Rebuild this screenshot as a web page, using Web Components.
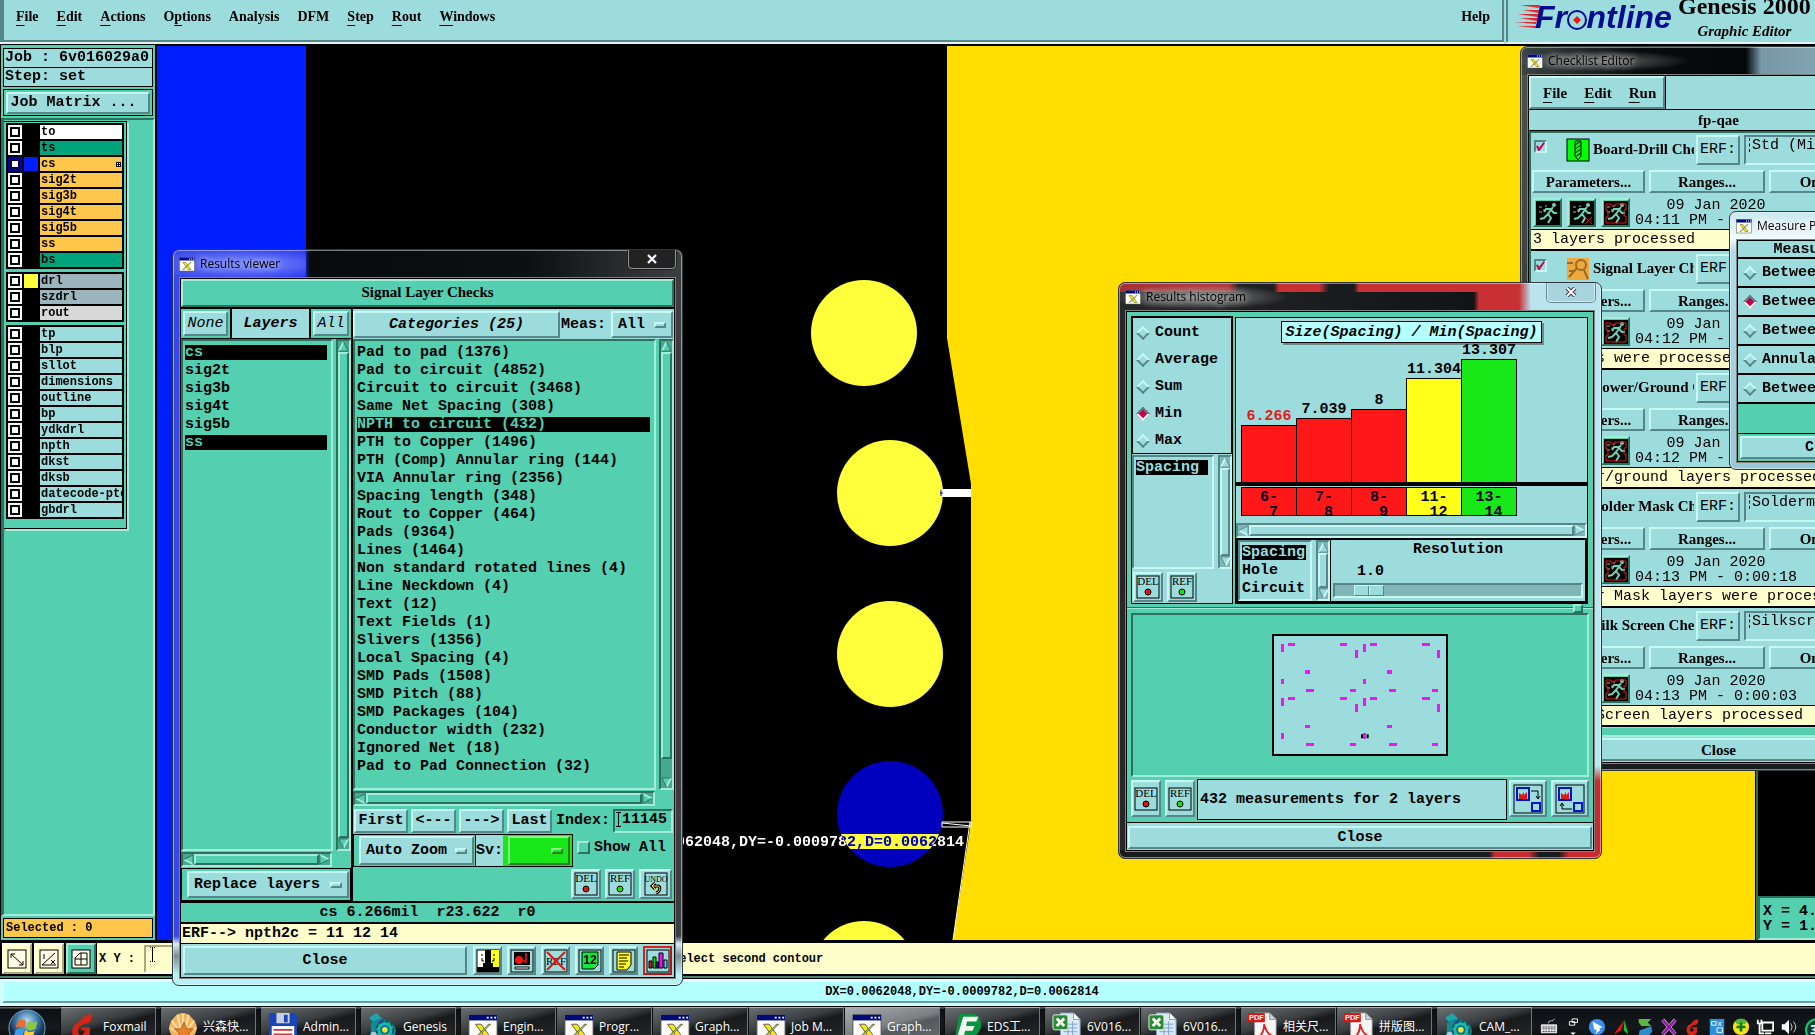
<!DOCTYPE html>
<html lang="en">
<head>
<meta charset="utf-8">
<title>Genesis 2000 - Graphic Editor</title>
<style>
  body {
    margin: 0;
    background: #000;
    overflow: hidden;
    font: bold 15px/18px "Liberation Mono", "Courier New", monospace;
    color: #000;
  }
</style>
</head>
<body>
<gx-desktop></gx-desktop>

<script>
// palettes, handed down to every widget as custom properties
const TEAL = "--face:#54cfb0; --hi:#a2edd9; --lo:#2c705e; --trough:#46a890;";
const AQUA = "--face:#9cdcdc; --hi:#c8f8f4; --lo:#56868a; --trough:#80b6b8;";
const CREAM = "--face:#ffffcc; --hi:#ffffe8; --lo:#a8a884; --trough:#d8d8a8;";
const SERIF = '"Liberation Serif", "Times New Roman", serif';
const UI = '"Open Sans", "Noto Sans CJK SC", sans-serif';

const base = /*css*/ `
  * { box-sizing: border-box; }
  :host([hidden]) { display: none; }
  button, input, select { font: inherit; color: inherit; margin: 0; border-radius: 0; outline: none; }
  button { padding: 0; background: none; border: 0; text-align: center; }
  .teal { ${TEAL} background: var(--face); }
  .aqua { ${AQUA} background: var(--face); }
  .cream { ${CREAM} background: var(--face); }
  .up { border: 2px solid; border-color: var(--hi) var(--lo) var(--lo) var(--hi); }
  .down { border: 2px solid; border-color: var(--lo) var(--hi) var(--hi) var(--lo); }
`;

class Widget extends HTMLElement {
  constructor() {
    super();
    this.attachShadow({ mode: "open" });
  }
  connectedCallback() {
    const t = document.createElement("template");
    t.innerHTML = `<style>${base}${this.css()}</style>${this.html()}`;
    this.shadowRoot.replaceChildren(t.content.cloneNode(true));
  }
  attr(name, fallback = "") {
    return this.getAttribute(name) ?? fallback;
  }
  css() { return ""; }
  html() { return "<slot></slot>"; }
}

/* ---------- icons ---------- */

const runner = (extra) => `
  <rect width="24" height="24" fill="#000"/>
  <g stroke="#6fd0b4" stroke-width="2" fill="none">
    <path d="M17 6L12 13L15 17L12 22M12 13L8 17L4 18M15 8L10 8L8 11M15 9L18 12L21 12"/>
    <path d="M3 6h3M7 9h2M9 5h2M3 11h3" stroke-width="1"/>
  </g><circle cx="18" cy="4" r="2" fill="#6fd0b4"/>${extra}`;
const tag = (word, size, color) => `
  <rect x="1" y="1" width="22" height="22" fill="none" stroke="#000"/>
  <text x="12" y="10" font-family="Liberation Serif, serif" font-weight="normal" font-size="${size}" text-anchor="middle">${word}</text>
  ${color ? `<circle cx="12" cy="17" r="3" fill="${color}" stroke="#000"/>` : ""}`;
const xwin = `
  <rect x="1" y="3" width="30" height="27" fill="#fff" stroke="#555"/>
  <rect x="1" y="3" width="30" height="6" fill="#000a78"/>
  <path d="M20 5h2v2h-2zM24 5h2v2h-2zM28 5h2v2h-2z" fill="#fff"/>
  <path d="M8 13h6l10 14h-6z" fill="#f4ec00" stroke="#554" stroke-width="1"/>
  <path d="M22 13h2L10 27H8z" fill="#f4ec00" stroke="#554" stroke-width="1"/>`;
const foxmail = `<path d="M25 2C14 4 16 9 9 12C2 17 3 30 13 31C24 31 24 24 23 16L13 17L16 20L18 20C17 25 12 26 11 22C10 17 14 13 20 12C26 11 25 6 25 2Z" fill="#d62518"/>`;
const gears = `
  <path d="M1 6L9 1L15 7L5 10Z" fill="#19a7ae"/>
  <path d="M3 12C10 5 26 8 29 17C32 25 24 31 15 31C6 31 0 25 3 21Z" fill="#118a94"/>
  <circle cx="18" cy="19" r="9" fill="#1cb9a8" stroke="#0c5860" stroke-width="2" stroke-dasharray="4 2"/>
  <circle cx="18" cy="19" r="5" fill="#0f6e88"/><circle cx="18" cy="19" r="3" fill="#e6e640"/>
  <circle cx="6" cy="24" r="3" fill="#b8c8d8"/><path d="M11 12l6-3" stroke="#274a8c" stroke-width="3"/>`;
const excel = `
  <path d="M9 1h14l7 7v24H9z" fill="#dceaf8" stroke="#7f9cc0"/>
  <path d="M23 1v7h7" fill="#fff" stroke="#7f9cc0"/>
  <path d="M12 13h15M12 17h15M12 21h15M12 25h15M17 10v20M22 10v20" stroke="#7c9fcc"/>
  <rect x="1" y="3" width="16" height="16" rx="2" fill="#2d8a34" stroke="#e8f4e8"/>
  <path d="M5 7l8 8M13 7l-8 8" stroke="#fff" stroke-width="3"/>`;
const pdf = `
  <path d="M7 1h16l7 7v24H7z" fill="#f6f6f6" stroke="#999"/>
  <path d="M23 1v7h7" fill="#ccc" stroke="#999"/>
  <path d="M10 30C15 24 18 18 17 13C20 22 23 26 29 26C22 24 16 26 10 30" fill="none" stroke="#e02020" stroke-width="2"/>
  <rect x="0" y="1" width="18" height="10" rx="1" fill="#d81818"/>
  <text x="9" y="9" font-family="Liberation Sans, sans-serif" font-weight="bold" font-size="8" fill="#fff" text-anchor="middle">PDF</text>`;

const ICONS = {
  del: [24, tag("DEL", 11, "#e01414")],
  ref: [24, tag("REF", 11, "#14e014")],
  undo: [24, tag("UNDO", 8) + `<path d="M9 14h5c3 1 2 6-2 7M11 11l-3 3l3 3" fill="none" stroke="#000" stroke-width="3"/><path d="M9 14h5c3 1 2 6-2 7M11 11l-3 3l3 3" fill="none" stroke="#ffe83c" stroke-width="1"/>`],
  faces: [24, `<rect x="1" y="1" width="22" height="22" fill="#fff" stroke="#000"/><path d="M12 1h11v22H12z" fill="#ffff1c"/><path d="M9 1h6v13h2v4h6v5H1v-5h6v-4h2z"/><path d="M5 6h2M17 6h2M6 9v3M6 12h2M18 9v3M16 12h2" stroke="#000"/>`],
  record: [24, `<rect x="1" y="1" width="22" height="22" fill="#9cdcdc" stroke="#000"/><path d="M4 3h16v13H4z"/><circle cx="9" cy="11" r="4" fill="#f01414"/><path d="M16 4v10M12 12h4" stroke="#c01414" stroke-width="2"/><path d="M5 18h14v2H5z" fill="#fff" stroke="#000"/>`],
  noref: [24, tag("REF", 11).replace('y="10"', 'y="16"') + `<path d="M3 3l18 18M21 3L3 21" stroke="#e01414" stroke-width="2"/>`],
  pages: [24, `<rect x="1" y="1" width="22" height="22" fill="#9cdcdc" stroke="#000"/><path d="M4 3h16v13l-4 4H4z" fill="#14e83c" stroke="#000"/><text x="12" y="15" font-family="Liberation Sans, sans-serif" font-weight="bold" font-size="12" text-anchor="middle">12</text>`],
  note: [24, `<rect x="1" y="1" width="22" height="22" fill="#9cdcdc" stroke="#000"/><path d="M5 3h14v13l-4 5H5z" fill="#ffff28" stroke="#000"/><path d="M7 6h10M7 9h8M7 12h9M7 15h7M7 18h5" stroke="#000"/>`],
  chart: [24, `<rect x="1" y="1" width="22" height="22" fill="#9cdcdc" stroke="#000"/><path d="M3 12h3v7H3z" fill="#d01c1c" stroke="#000"/><path d="M7 8h3v11H7z" fill="#14d014" stroke="#000"/><path d="M10 13h3v6h-3z" fill="#1414b4" stroke="#000"/><path d="M13 4h4v15h-4z" fill="#e814e8" stroke="#000"/><path d="M18 11h3v8h-3z" fill="#3ce0f0" stroke="#000"/>`],
  run: [24, runner("")],
  runsel: [24, runner(`<path d="M15 16l7 7M22 16l-7 7" stroke="#c01414"/>`)],
  runall: [24, runner(`<path d="M2 3h5v2h4v-2h11v6h-2v6h2v7H2v-6h2v-6H2z" fill="none" stroke="#e01c1c"/>`)],
  drill: [24, `<rect x="1" y="1" width="22" height="22" fill="#00ff00" stroke="#000"/><path d="M9 3h6v15l-3 4l-3-4z" fill="none" stroke="#000"/><path d="M9 7l6-4M9 11l6-4M9 15l6-4M9 19l6-4" stroke="#000"/>`],
  signal: [24, `<rect x="1" y="1" width="22" height="22" fill="#f0a83c"/><circle cx="15" cy="8" r="5" fill="none" stroke="#9a6a28" stroke-width="2"/><path d="M11 11L3 20M1 6h6M18 13l4 9M3 14h5" stroke="#9a6a28" stroke-width="2"/>`],
  copyout: [30, `<rect x="1" y="1" width="28" height="28" fill="none" stroke="#000"/><rect x="4" y="4" width="12" height="12" fill="#9cdcdc" stroke="#0014d0" stroke-width="2"/><path d="M6 15V9l3 2l2-3v3l3-3v7z" fill="#e81414"/><path d="M18 7h7v8M23 12l2 3l2-3" fill="none" stroke="#000"/><rect x="19" y="19" width="8" height="8" fill="none" stroke="#0014d0" stroke-width="2"/>`],
  copyin: [30, `<rect x="1" y="1" width="28" height="28" fill="none" stroke="#000"/><rect x="4" y="4" width="12" height="12" fill="#9cdcdc" stroke="#0014d0" stroke-width="2"/><path d="M6 15V9l3 2l2-3v3l3-3v7z" fill="#e81414"/><path d="M17 25H7v-6M5 22l2-3l2 3" fill="none" stroke="#000"/><rect x="19" y="19" width="8" height="8" fill="none" stroke="#0014d0" stroke-width="2"/>`],
  snapline: [20, `<rect x="1" y="1" width="18" height="18" fill="#ffffe8" stroke="#000"/><path d="M4 5l12 11M4 9V5h4M16 12v4h-4" fill="none" stroke="#000"/>`],
  snapangle: [20, `<rect x="1" y="1" width="18" height="18" fill="#ffffe8" stroke="#000"/><path d="M3 16L16 4M3 16h14M5 5v5M12 11l4 4M16 11l-4 4" fill="none" stroke="#000"/>`],
  snapgrid: [20, `<rect x="1" y="1" width="18" height="18" fill="#ffffe8" stroke="#000"/><path d="M4 16V9l5-5h7v12zM10 4v12M4 10h12" fill="none" stroke="#000"/>`],
  xwin: [32, xwin],
  foxmail: [32, foxmail],
  shell: [32, `<path d="M16 1C22 1 30 9 31 17C30 24 25 29 21 31H11C6 29 2 24 1 17C2 9 9 1 16 1Z" fill="#f2b45c"/><path d="M16 2v18M10 3l4 17M22 3l-4 17M4 9l9 12M28 9l-9 12M2 17l10 5M30 17l-10 5" stroke="#fbe0ac" stroke-width="2"/><path d="M17 11l3 7h7l-5 5l2 8l-7-4l-7 4l2-8l-5-5h7z" fill="#e8832c" stroke="#a85410"/>`],
  floppy: [32, `<path d="M1 1h27l3 3v28H1z" fill="#1c44b8"/><rect x="9" y="1" width="14" height="11" fill="#c8d0e0"/><rect x="17" y="3" width="4" height="8" fill="#1c44b8"/><rect x="4" y="15" width="24" height="17" fill="#fff"/><path d="M6 19h20M6 24h20" stroke="#d83030" stroke-width="2"/>`],
  gears: [32, gears],
  eds: [32, `<path d="M8 2h16c8 4 9 14 4 20c-3 4-6 5-10 5l-2 5H2z" fill="#0a9440"/><path d="M12 5h16l-2 5H16l-1 5h9l-2 5h-8l-3 12H4z" fill="#f0f8f0"/>`],
  excel: [32, excel],
  pdf: [32, pdf],
  orb: [40, `<defs><radialGradient id="o" cx=".5" cy=".3"><stop offset="0" stop-color="#b8dcf0"/><stop offset=".6" stop-color="#3b78a8"/><stop offset="1" stop-color="#12304c"/></radialGradient></defs><circle cx="20" cy="20" r="19" fill="url(#o)" stroke="#7fa8c0"/><path d="M10 13q5-4 9 0l-2 7q-4-3-9 0z" fill="#f06a2c"/><path d="M21 13q5 3 10 0l-2 8q-5 3-10 0z" fill="#8cc83c"/><path d="M8 22q4-3 9 0l-2 7q-4-3-9 0z" fill="#3c9ce8"/><path d="M18 22q5 4 10 1l-2 7q-5 3-10 0z" fill="#fccc30"/>`],
  keyboard: [20, `<path d="M9 6q0-3 4-3q2 0 3-2" fill="none" stroke="#ccc"/><rect x="1" y="7" width="18" height="10" rx="1" fill="#ddd"/><path d="M3 10h14M3 12h14M3 15h14" stroke="#444" stroke-dasharray="2 1"/>`],
  restore: [20, `<path d="M9 1h6v4h-6zM6 4h6v4H6z" fill="#111" stroke="#fff"/><path d="M7 16h6l-3 3z" fill="#fff"/>`],
  bird: [20, `<circle cx="10" cy="10" r="9" fill="#3c90f0"/><path d="M5 4l11 6l-4 2l2 1l-6 5l2-5h-3z" fill="#fff"/>`],
  tri: [20, `<path d="M14 2L2 18L10 14z" fill="#f01414"/><path d="M14 2l4 16l-5-4z" fill="#18c030"/>`],
  swirl: [20, `<path d="M3 1h14l-4 4l4 4H6L3 5z" fill="#5cb83c"/><path d="M17 9L4 14l-1 5h12l3-4z" fill="#2c8cc8"/>`],
  cross: [20, `<path d="M3 2l14 16M17 2L3 18" stroke="#e8c8f0" stroke-width="4"/><path d="M3 2l14 16M17 2L3 18" stroke="#8c1c9c" stroke-width="3"/>`],
  foxtray: [32, foxmail],
  dict: [20, `<rect x="2" y="1" width="16" height="18" fill="#2c90dc"/><path d="M4 4h5v4H4zM11 4l4 5M15 4l-4 5M10 11h6v5h-6z" fill="none" stroke="#fff"/>`],
  plus: [20, `<circle cx="10" cy="10" r="9" fill="#f4e414"/><path d="M3 4a9 9 0 0 1 14 0l-3 3H6z" fill="#50b43c"/><path d="M10 5v10M5 10h10" stroke="#107820" stroke-width="3"/>`],
  net: [20, `<path d="M7 5h12v9H7zM10 17h7M2 2v4h4V2M4 6v11h5" fill="none" stroke="#fff" stroke-width="2"/>`],
  sound: [20, `<path d="M2 7h3l5-5v16l-5-5H2z" fill="#fff"/><path d="M12 6q3 4 0 8M15 4q5 6 0 12" fill="none" stroke="#ddd"/>`],
};

class GxIcon extends Widget {
  css() { return `:host { display: block; flex: none; width: 24px; height: 24px; } svg { display: block; width: 100%; height: 100%; }`; }
  html() {
    const [box, art] = ICONS[this.attr("name")];
    return `<svg viewBox="0 0 ${box} ${box}" aria-hidden="true">${art}</svg>`;
  }
}
customElements.define("gx-icon", GxIcon);

/* ---------- motif widgets ---------- */

class MotifButton extends Widget {
  css() {
    return /*css*/ `
      :host { display: grid; }
      button { display: flex; align-items: center; justify-content: center; background: var(--face); white-space: nowrap; min-width: 0; }`;
  }
  html() { return `<button class="up"><slot></slot></button>`; }
}
customElements.define("motif-button", MotifButton);

// drop-down with the small raised bar at its right end
class MotifOption extends Widget {
  css() {
    return /*css*/ `
      :host { display: grid; align-items: stretch; min-height: 0; }
      select, i { grid-area: 1 / 1; }
      select { appearance: none; background: var(--face); width: 100%; padding: 0 20px 0 5px; }
      i { align-self: center; justify-self: end; width: 12px; height: 6px; margin-right: 7px; background: var(--face); pointer-events: none; }`;
  }
  html() {
    return `<select class="up" aria-label="${this.attr("label")}"><option>${this.attr("value")}</option></select><i class="up"></i>`;
  }
}
customElements.define("motif-option", MotifOption);

class MotifScroll extends Widget {
  css() {
    const down = this.hasAttribute("across") ? "row" : "column";
    return /*css*/ `
      :host { display: flex; flex-direction: ${down}; flex: none; ${down === "row" ? "height" : "width"}: 15px;
              background: var(--trough); border: 2px solid; border-color: var(--lo) var(--hi) var(--hi) var(--lo); }
      svg { display: block; flex: none; width: 11px; height: 11px; }
      .thumb { flex: 1; background: var(--face); }
      .rest { flex: none; ${down === "row" ? "width" : "height"}: ${this.attr("rest", "0")}px; }`;
  }
  html() {
    const arrow = (turn) => `<svg viewBox="0 0 12 12" aria-hidden="true"><g transform="rotate(${turn} 6 6)">
      <path d="M6 1L11 11H1Z" style="fill:var(--face)"/><path d="M6 1L1 11" style="stroke:var(--hi)" stroke-width="2"/>
      <path d="M6 1L11 11H1" fill="none" style="stroke:var(--lo)"/></g></svg>`;
    const across = this.hasAttribute("across");
    return `${arrow(across ? 270 : 0)}<div class="thumb up"></div><div class="rest"></div>${arrow(across ? 90 : 180)}`;
  }
}
customElements.define("motif-scroll", MotifScroll);

// items split by "|", a leading "*" marks a selected one
class MotifList extends Widget {
  css() {
    return /*css*/ `
      :host { display: block; min-width: 0; overflow: hidden; border: 2px solid; border-color: var(--lo) var(--hi) var(--hi) var(--lo); }
      ul { margin: 0; padding: var(--list-top, 3px) 4px 0 2px; list-style: none; }
      li { height: 15px; line-height: 15px; margin-bottom: 3px; white-space: pre; }
      li[aria-selected=true] { background: #000; color: var(--face); }`;
  }
  html() {
    return `<ul role="listbox">` + this.attr("items").split("|").map((s) =>
      `<li role="option" aria-selected="${s[0] === "*"}">${s.replace("*", "")}</li>`).join("") + `</ul>`;
  }
}
customElements.define("motif-list", MotifList);

class MotifRadio extends Widget {
  css() {
    return /*css*/ `
      :host { display: flex; align-items: center; }
      label { display: flex; align-items: center; gap: 7px; white-space: nowrap; }
      input { appearance: none; width: 10px; height: 10px; margin: 0 0 0 2px; transform: rotate(45deg);
              border: 2px solid; border-color: var(--hi) var(--lo) var(--lo) var(--hi); }
      input:checked { border-color: var(--lo) #fff #fff var(--lo); background: #c8004c; }`;
  }
  html() {
    return `<label><input type="radio" ${this.hasAttribute("checked") ? "checked" : ""}><slot></slot></label>`;
  }
}
customElements.define("motif-radio", MotifRadio);

/* ---------- window frame ---------- */

class GlassWindow extends Widget {
  css() {
    return /*css*/ `
      :host { position: absolute; display: flex; flex-direction: column; padding: 0 6px 6px; border: 1px solid #30383c;
              border-radius: 7px; box-shadow: inset 0 0 0 1px rgba(255,255,255,.45); background: var(--glass); overflow: hidden; }
      header { flex: none; display: flex; align-items: center; gap: 4px; height: 27px; font: 12px/18px ${UI}; white-space: nowrap; }
      gx-icon { width: 16px; height: 16px; }
      h1 { font: inherit; margin: 0; padding: 0 1px; text-shadow: 0 0 6px var(--glow), 0 0 8px var(--glow), 0 0 10px var(--glow); }
      header button { align-self: flex-start; margin-left: auto; width: 48px; height: 19px; border: 1px solid; border-top: 0; border-radius: 0 0 4px 4px;
                      border-color: rgba(255,255,255,.5); background: var(--closer, #222); box-shadow: 0 0 0 1px rgba(0,0,0,.4); }
      svg { display: block; margin: auto; }
      main { flex: 1; min-height: 0; border: 1px solid rgba(255,255,255,.5); padding: 1px; background: #000; display: flex; flex-direction: column; }
      ::slotted(*) { flex: 1; }`;
  }
  html() {
    const close = this.hasAttribute("closer")
      ? `<button aria-label="Close window"><svg width="12" height="10" viewBox="0 0 12 10"><path d="M2 1l8 8M10 1l-8 8" stroke="#334" stroke-width="4"/><path d="M2 1l8 8M10 1l-8 8" stroke="#fff" stroke-width="2"/></svg></button>` : "";
    return `<header><gx-icon name="xwin"></gx-icon><h1>${this.attr("heading")}</h1>${close}</header><main><slot></slot></main>`;
  }
}
customElements.define("glass-window", GlassWindow);

/* ---------- main menu and logo ---------- */

// "_" goes before the underlined letter
const menuItem = (s) => `<button>${s.replace(/_(.)/, "<u>$1</u>")}</button>`;

class MainMenu extends Widget {
  css() {
    return /*css*/ `
      :host { flex: none; display: flex; height: 45px; overflow: hidden; border-bottom: 1px solid #000; ${AQUA} background: var(--face); }
      nav { flex: 1; display: flex; gap: 18px; align-items: flex-start; padding: 8px 12px 0 12px; border: solid; border-width: 0 2px 2px 4px;
            border-color: var(--lo); font: bold 14px/18px ${SERIF}; box-shadow: 0 2px 0 #e4f4f4; margin-bottom: 2px; }
      nav button:last-child { margin-left: auto; }
      u { text-underline-offset: 4px; }
      .brand { width: 414px; display: flex; gap: 2px; margin: 0 0 2px 2px; padding-left: 6px; border-left: 2px solid var(--lo); box-shadow: 0 2px 0 #e4f4f4; }
      .name { display: flex; flex-direction: column; justify-content: flex-end; gap: 4px; text-align: center; padding-bottom: 2px; font-family: ${SERIF}; white-space: nowrap; }
      .name b { font-size: 24px; line-height: 24px; }
      .name em { font-size: 15px; line-height: 18px; }
      svg { display: block; flex: none; }`;
  }
  html() {
    const items = ["_File", "_Edit", "_Actions", "O_ptions", "Analysis", "DFM", "_Step", "_Rout", "_Windows", "Help"];
    return /*html*/ `
      <nav>${items.map(menuItem).join("")}</nav>
      <div class="brand">
        <svg width="162" height="38" viewBox="0 0 162 38">
          <path d="M6 5h20l-1 3zM9 10h17l-1 3zM3 14h22l-1 3zM6 18h18l-1 3zM0 22h22v2zM3 26h19v2z" fill="#e8282c"/>
          <text x="21" y="28" font-family="Liberation Sans, sans-serif" font-style="italic" font-weight="bold" font-size="32" fill="#000c90">Frontline</text>
          <circle cx="63" cy="20" r="9" fill="#9cdcdc" stroke="#000c90" stroke-width="2"/>
          <path d="M63 16l4 4l-4 4l-4-4z" fill="#f01414"/>
        </svg>
        <div class="name"><b>Genesis 2000</b><em>Graphic Editor</em></div>
      </div>`;
  }
}
customElements.define("main-menu", MainMenu);

/* ---------- layer panel ---------- */

const GREEN = "#00a47c", AMBER = "#ffc64c", SLATE = "#9cb4bc", PALE = "#9cdcdc";
const LAYERS = [
  [["to", "#fff"], ["ts", GREEN], ["cs", AMBER, "#001eff"], ["sig2t", AMBER], ["sig3b", AMBER], ["sig4t", AMBER], ["sig5b", AMBER], ["ss", AMBER], ["bs", GREEN]],
  [["drl", SLATE, "#ffff3c"], ["szdrl", SLATE], ["rout", "#d8d8d8"]],
  ["tp", "blp", "sllot", "dimensions", "outline", "bp", "ydkdrl", "npth", "dkst", "dksb", "datecode-ptd", "gbdrl"].map((n) => [n, PALE]),
];

class LayerPanel extends Widget {
  css() {
    return /*css*/ `
      :host { flex: none; display: flex; flex-direction: column; width: 157px; border-left: 1px solid #000; border-right: 2px solid #000; ${TEAL} background: var(--face); }
      .job { margin: 3px 2px 0; }
      .job div { border: 1px solid #000; padding: 0 1px; height: 20px; margin-bottom: -1px; white-space: nowrap; }
      .matrix { border: 1px solid #000; margin: 3px 2px 2px; padding: 2px; height: 27px; display: grid; }
      .matrix motif-button { ${AQUA} }
      .well { flex: 1; border: solid; border-width: 2px 2px 2px 3px; border-color: var(--lo) var(--hi) var(--hi) var(--lo); }
      .frame { width: 123px; border: 1px solid #000; border-left: 0; box-shadow: 2px 2px 0 var(--hi); padding: 1px 2px 9px; margin-top: 1px; display: grid; gap: 3px; }
      .group { background: #000; padding: 2px; display: grid; gap: 2px; }
      .layer { display: grid; grid-template-columns: 14px 14px 1fr; gap: 2px; height: 14px; font-size: 12px; line-height: 14px; }
      .layer span { overflow: hidden; padding: 0 1px; display: flex; align-items: center; justify-content: space-between; white-space: nowrap; }
      .layer input { appearance: none; width: 14px; height: 14px; border: 2px solid #fff; box-shadow: inset 0 0 0 2px #000; background: #fff; }
      .layer input:checked { border-color: #0000a8; box-shadow: inset 0 0 0 2px #00003c; }
      .sel { border: 1px solid #000; margin: 2px; padding: 0 2px; height: 20px; background: ${AMBER}; font-size: 12px; }`;
  }
  html() {
    const grid = `<svg width="5" height="5" viewBox="0 0 5 5"><rect width="5" height="5"/><path d="M1 1h1v1H1zM3 1h1v1H3zM1 3h1v1H1zM3 3h1v1H3z" fill="#fff"/></svg>`;
    const layer = ([name, bg, paint = "#000"]) => `
      <label class="layer"><input type="checkbox" ${name === "cs" ? "checked" : ""}><i style="background:${paint}"></i>
      <span style="background:${bg}">${name}${name === "cs" ? grid : ""}</span></label>`;
    return /*html*/ `
      <div class="job"><div class="aqua">Job : 6v016029a0</div><div class="aqua">Step: set</div></div>
      <div class="matrix"><motif-button>Job Matrix ...&nbsp;</motif-button></div>
      <div class="well"><div class="frame">${LAYERS.map((g) => `<div class="group">${g.map(layer).join("")}</div>`).join("")}</div></div>
      <div class="sel">Selected : 0</div>`;
  }
}
customElements.define("layer-panel", LayerPanel);

/* ---------- board view ---------- */

class BoardView extends Widget {
  css() {
    return /*css*/ `
      :host { flex: 1; display: flex; min-width: 0; background: #000; padding-top: 1px; }
      .view { flex: 1; min-width: 0; overflow: hidden; background: #ffde00; border-right: 1px solid #000; }
      svg { display: block; }
      aside { flex: none; width: 164px; border-left: 2px solid #2c705e; display: flex; flex-direction: column; justify-content: flex-end; }
      .xy { height: 44px; padding: 6px 3px; line-height: 15px; white-space: pre; }`;
  }
  html() {
    // drawn on the same grid as the screen, origin at the corner of the view
    return /*html*/ `
      <div class="view"><svg width="820" height="894" viewBox="157 46 820 894">
        <path d="M157 46H947V338L971 484V822L953 940H157Z"/>
        <path d="M970 822L953 940" stroke="#fff"/>
        <path d="M157 46H306V940H157Z" fill="#001eff"/>
        <g fill="#ffff3c"><circle cx="864" cy="333" r="53"/><circle cx="890" cy="493" r="53"/><circle cx="890" cy="654" r="53"/><circle cx="864" cy="974" r="53"/></g>
        <circle cx="890" cy="814" r="53" fill="#0000be"/>
        <clipPath id="pad"><circle cx="890" cy="814" r="53"/></clipPath>
        <rect x="830" y="834" width="120" height="15" fill="#ffff3c" clip-path="url(#pad)"/>
        <path d="M941 489h30v8h-30z" fill="#fff"/><path d="M940 493h3M941 490v6" stroke="#0000be"/>
        <path d="M942 822h29v5h-29zM942 823l29 3" fill="none" stroke="#fff"/>
        <text x="622" y="846" fill="#fff" style="mix-blend-mode:difference">DX=0.0062048,DY=-0.0009782,D=0.0062814</text>
      </svg></div>
      <aside><div class="xy teal down">X = 4.
Y = 1.</div></aside>`;
  }
}
customElements.define("board-view", BoardView);

/* ---------- prompt and status lines ---------- */

class PromptBar extends Widget {
  css() {
    return /*css*/ `
      :host { flex: none; display: block; font-size: 12px; }
      .prompt { display: flex; align-items: center; height: 36px; border: solid #000; border-width: 3px 0 2px 2px; }
      .tools { display: flex; gap: 2px; height: 100%; background: #000; padding-right: 1px; }
      .tools motif-button { width: 30px; }
      .tools motif-button:last-child { ${TEAL} }
      gx-icon { width: 20px; height: 20px; }
      label { display: flex; align-items: center; height: 100%; padding-left: 2px; gap: 9px; }
      .field { display: flex; padding-left: 4px; width: 517px; height: 28px; align-items: flex-start; }
      .field input { border: 0; background: none; flex: 1; }
      .caret { width: 5px; height: 15px; border: 1px dotted #000; border-width: 1px 0; background: linear-gradient(#000, #000) center / 1px 100% no-repeat; }
      .msg { padding-left: 11px; }
      .status { height: 31px; border-top: 2px solid #4c8478; border-bottom: 1px solid #000; padding: 2px 0 3px 2px; background: linear-gradient(#000 1px, #d0ffff 1px); }
      .status p { margin: 0; height: 23px; line-height: 20px; text-align: center; background: #b4ffff; border: solid; border-width: 2px 0 2px 2px; border-color: #dcffff #6c9c9c #6c9c9c #dcffff; border-right: 0; }`;
  }
  html() {
    return /*html*/ `
      <div class="prompt cream">
        <div class="tools"><motif-button><gx-icon name="snapline"></gx-icon></motif-button><motif-button><gx-icon name="snapangle"></gx-icon></motif-button><motif-button><gx-icon name="snapgrid"></gx-icon></motif-button></div>
        <label>X Y :<span class="field down"><i class="caret"></i><input></span></label>
        <span class="msg">Select second contour</span>
      </div>
      <div class="status"><p>DX=0.0062048,DY=-0.0009782,D=0.0062814</p></div>`;
  }
}
customElements.define("prompt-bar", PromptBar);

/* ---------- results viewer ---------- */

const CATEGORIES = ["Pad to pad (1376)", "Pad to circuit (4852)", "Circuit to circuit (3468)", "Same Net Spacing (308)",
  "*NPTH to circuit (432)", "PTH to Copper (1496)", "PTH (Comp) Annular ring (144)", "VIA Annular ring (2356)",
  "Spacing length (348)", "Rout to Copper (464)", "Pads (9364)", "Lines (1464)", "Non standard rotated lines (4)",
  "Line Neckdown (4)", "Text (12)", "Text Fields (1)", "Slivers (1356)", "Local Spacing (4)", "SMD Pads (1508)",
  "SMD Pitch (88)", "SMD Packages (104)", "Conductor width (232)", "Ignored Net (18)", "Pad to Pad Connection (32)"];

class ResultsViewer extends Widget {
  css() {
    return /*css*/ `
      :host { display: flex; flex-direction: column; ${TEAL} background: var(--face); }
      h2 { margin: 0; height: 28px; border-width: 3px; text-align: center; font: bold 15px/22px ${SERIF}; }
      .body { flex: 1; display: grid; grid-template-columns: 170px 1fr; gap: 2px; background: #000; border-top: 2px solid #000; }
      .col { display: flex; flex-direction: column; background: var(--face); min-width: 0; }
      .head { display: grid; grid-template-columns: 49px 1fr 40px; gap: 2px; height: 30px; background: #000; border-bottom: 1px solid #000; font-style: italic; text-align: center; }
      .head div { padding: 2px; display: grid; }
      .head motif-button { ${AQUA} font-weight: normal; }
      .head span { line-height: 29px; }
      .lists { flex: 1; display: flex; gap: 3px; min-height: 0; --list-top: 4px; }
      .lists motif-list { flex: 1; }
      .foot { display: flex; padding: 1px 19px 1px 0; }
      .foot motif-scroll { flex: 1; }
      .replace { height: 33px; border: 1px solid #000; padding: 2px 1px 2px 5px; display: grid; }
      .replace motif-option, .zoom .mode motif-option { ${AQUA} }
      .cats { display: grid; grid-template-columns: 207px 1fr 62px; column-gap: 1px; height: 30px; padding: 2px 1px 2px 0; }
      .cats motif-button { font-style: italic; }
      .cats span { line-height: 27px; }
      .nav { display: grid; grid-template-columns: 54px 45px 45px 45px 1fr; gap: 3px; padding: 2px 1px 1px 1px; height: 27px; }
      .nav motif-button { ${AQUA} }
      .nav label { display: grid; grid-template-columns: 1fr 60px; padding-left: 1px; align-items: center; }
      .nav .idx { display: flex; height: 24px; padding: 1px; gap: 1px; align-items: flex-start; min-width: 0; }
      .nav input { border: 0; padding: 0; background: none; width: 48px; height: 16px; }
      .ibeam { flex: none; width: 5px; height: 15px; border: solid #000; border-width: 1px 0; background: linear-gradient(#000, #000) center / 1px 100% no-repeat; }
      .zoom { display: flex; height: 33px; }
      .mode { width: 123px; border: 1px solid #000; padding: 1px 1px 1px 5px; display: grid; }
      .sv { display: grid; grid-template: 31px / 27px 1fr; width: 97px; border: 1px solid #000; border-left: 0; }
      .sv b { line-height: 31px; }
      .sv div { --face: #18e818; --hi: #88f488; --lo: #2c7c2c; background: var(--face); padding: 1px 2px 1px 5px; display: grid; min-height: 0; }
      .all { display: flex; align-items: flex-start; gap: 4px; padding: 5px 0 0 4px; white-space: nowrap; }
      .all input { appearance: none; width: 13px; height: 13px; margin-top: 2px; background: var(--face); }
      .tools { display: flex; gap: 4px; justify-content: flex-end; height: 34px; padding: 2px; }
      .tools motif-button { ${AQUA} width: 30px; }
      .tools motif-button:last-child { width: 33px; }
      .info { height: 21px; border-top: 2px solid #000; text-align: center; line-height: 20px; white-space: pre; }
      .erf { height: 22px; border: solid #000; border-width: 2px 0 1px; padding-left: 1px; line-height: 20px; }
      .end { display: grid; grid-template-columns: 1fr repeat(6, 29px); gap: 5px; height: 33px; padding: 2px; }
      .end .closer { margin-right: 1px; }
      .end motif-button:last-child { --hi: #e01c1c; --lo: #b81414; }`;
  }
  html() {
    return /*html*/ `
      <h2 class="up">Signal Layer Checks</h2>
      <div class="body">
        <div class="col">
          <div class="head"><div class="teal"><motif-button>None</motif-button></div><span class="aqua">Layers</span><div class="teal"><motif-button>All</motif-button></div></div>
          <div class="lists"><motif-list items="*cs|sig2t|sig3b|sig4t|sig5b|*ss"></motif-list><motif-scroll></motif-scroll></div>
          <div class="foot"><motif-scroll across></motif-scroll></div>
          <div class="replace"><motif-option label="Layers mode" value="Replace layers"></motif-option></div>
        </div>
        <div class="col">
          <div class="cats aqua"><motif-button>Categories (25)</motif-button><span>Meas:</span><motif-option label="Measurements" value="All"></motif-option></div>
          <div class="lists"><motif-list items="${CATEGORIES.join("|")}"></motif-list><motif-scroll rest="18"></motif-scroll></div>
          <div class="foot"><motif-scroll across></motif-scroll></div>
          <div class="nav"><motif-button>First</motif-button><motif-button>&lt;---</motif-button><motif-button>---&gt;</motif-button><motif-button>Last</motif-button>
            <label>Index:<span class="idx down"><i class="ibeam"></i><input value="11145"></span></label></div>
          <div class="zoom"><div class="mode"><motif-option label="Zoom" value="Auto Zoom"></motif-option></div>
            <div class="sv aqua"><b>Sv:</b><div><motif-option label="Severity" value=""></motif-option></div></div>
            <label class="all"><input class="up" type="checkbox">Show All</label></div>
          <div class="tools"><motif-button><gx-icon name="del"></gx-icon></motif-button><motif-button><gx-icon name="ref"></gx-icon></motif-button><motif-button><gx-icon name="undo"></gx-icon></motif-button></div>
        </div>
      </div>
      <div class="info">cs 6.266mil  r23.622  r0</div>
      <div class="erf cream">ERF--&gt; npth2c = 11 12 14</div>
      <div class="end aqua"><motif-button class="closer">Close</motif-button>
        ${["faces", "record", "noref", "pages", "note", "chart"].map((n) => `<motif-button><gx-icon name="${n}"></gx-icon></motif-button>`).join("")}</div>`;
  }
}
customElements.define("results-viewer", ResultsViewer);

/* ---------- results histogram ---------- */

const BARS = [
  ["6.266", 57, "#ff1818", "6-\n 7"],
  ["7.039", 64, "#ff1818", "7-\n 8"],
  ["8", 73, "#ff1818", "8-\n 9"],
  ["11.304", 104, "#ffff18", "11-\n 12"],
  ["13.307", 123, "#18e818", "13-\n 14"],
];

// measurement marks, three units to a screen pixel
const MARKS = [
  [534,159,21,9],[690,159,21,9],[780,159,21,9],[936,159,24,9],[513,162,9,24],[759,162,9,24],[735,180,9,24],[981,180,9,24],
  [585,240,15,12],[831,240,15,12],[513,267,9,15],[759,267,9,15],[588,297,24,9],[720,297,18,9],[837,297,21,9],[966,297,18,9],
  [534,321,21,9],[690,321,21,9],[780,321,21,9],[936,321,24,9],[513,324,9,24],[759,324,9,24],[735,342,9,24],[981,342,9,24],
  [585,405,15,9],[831,405,15,9],[513,429,9,18],[759,429,9,18],[588,459,24,9],[720,459,18,9],[837,459,24,9],[966,459,18,9],
];

class ResultsHistogram extends Widget {
  css() {
    return /*css*/ `
      :host { display: flex; flex-direction: column; ${TEAL} background: var(--face); }
      .upper { display: grid; grid-template-columns: 102px 1fr; gap: 2px; height: 291px; padding: 4px 5px 0 4px; }
      .side { display: flex; flex-direction: column; border: 1px solid #000; min-width: 0; }
      .radios { display: grid; grid-auto-rows: 27px; height: 137px; padding: 1px 3px; border: 1px solid #000; }
      .pair { flex: 1; display: flex; gap: 4px; min-height: 0; padding-top: 1px; }
      .pair motif-list { flex: 1; }
      .pair motif-scroll { width: 14px; }
      .tools { display: flex; gap: 4px; padding: 3px 1px 1px; }
      .tools motif-button { width: 30px; height: 30px; }
      .right { display: flex; flex-direction: column; border: 1px solid #000; margin-top: 1px; min-width: 0; }
      h2 { align-self: center; margin: 3px 0 0; height: 22px; padding: 0 3px; border: 1px solid #000; box-shadow: 2px 2px 0 #6c8c8c; background: #b4ffff; font-size: 15px; line-height: 22px; font-style: italic; }
      .bars { display: flex; align-items: flex-end; height: 139px; padding-left: 5px; border-bottom: 4px solid #000; box-sizing: content-box; }
      .bars div { width: 56px; margin-right: -1px; text-align: center; line-height: 16px; }
      .bars div:first-child { color: #e01c1c; }
      .bars i { display: block; border: 1px solid #000; border-bottom: 0; }
      .bins { display: flex; padding: 1px 0 0 5px; margin-bottom: 7px; }
      .bins div { width: 56px; height: 29px; margin-right: -1px; border: 1px solid #000; display: flex; justify-content: center; }
      .bins span { white-space: pre; line-height: 15px; padding-top: 2px; color: #002; }
      .low { flex: 1; display: grid; grid-template-columns: 92px 1fr; border: 2px solid #000; min-height: 0; }
      .low .pair { padding: 0; }
      .res { border-left: 1px solid #000; display: flex; flex-direction: column; padding: 1px 2px; text-align: center; }
      .res output { text-align: left; padding: 4px 0 2px 24px; }
      input[type=range] { appearance: none; width: 100%; height: 15px; background: var(--trough); }
      input[type=range]::-webkit-slider-thumb { appearance: none; width: 30px; height: 11px; border: 1px solid; border-color: var(--hi) var(--lo) var(--lo) var(--hi);
        background: linear-gradient(90deg, var(--face) 13px, var(--lo) 13px 14px, var(--hi) 14px 15px, var(--face) 15px); }
      .sash { height: 10px; display: flex; align-items: center; background: linear-gradient(transparent 4px, var(--lo) 4px 5px, var(--hi) 5px 6px, transparent 6px); }
      .sash i { width: 10px; height: 9px; margin: 0 10px 0 auto; background: var(--face); }
      .map { flex: 1; margin: 0 4px; display: grid; place-items: center; }
      .foot { display: grid; grid-template-columns: 30px 30px 1fr 38px 38px; gap: 4px; height: 45px; padding: 2px 4px; }
      .foot motif-button { ${AQUA} margin: 1px 0 3px; }
      .foot p { margin: 0 -2px; border: 1px solid #000; padding: 0 2px; line-height: 39px; }
      .foot motif-button:nth-child(n+4) gx-icon { width: 30px; height: 30px; }
      .end { height: 28px; border-top: 1px solid #000; padding: 3px 1px 1px; display: grid; }`;
  }
  html() {
    return /*html*/ `
      <div class="upper">
        <div class="side aqua">
          <div class="radios">${["Count", "Average", "Sum", "Min", "Max"].map((n) => `<motif-radio ${n === "Min" ? "checked" : ""}>${n}</motif-radio>`).join("")}</div>
          <div class="pair"><motif-list items="*Spacing"></motif-list><motif-scroll></motif-scroll></div>
          <div class="tools"><motif-button><gx-icon name="del"></gx-icon></motif-button><motif-button><gx-icon name="ref"></gx-icon></motif-button></div>
        </div>
        <div class="right aqua">
          <h2>Size(Spacing) / Min(Spacing)</h2>
          <div class="bars">${BARS.map(([v, h, c]) => `<div>${v}<i style="height:${h}px;background:${c}"></i></div>`).join("")}</div>
          <div class="bins">${BARS.map(([, , c, t]) => `<div style="background:${c}"><span>${t}</span></div>`).join("")}</div>
          <motif-scroll across></motif-scroll>
          <div class="low">
            <div class="pair"><motif-list items="*Spacing|Hole|Circuit"></motif-list><motif-scroll></motif-scroll></div>
            <div class="res"><label for="res">Resolution</label><output>1.0</output><input id="res" class="down" type="range" min="0" max="100" value="9"></div>
          </div>
        </div>
      </div>
      <div class="sash"><i class="up"></i></div>
      <div class="map down">
        <svg width="176" height="122" viewBox="486 132 528 366"><rect x="489" y="135" width="522" height="360" fill="#9cdcdc" stroke="#000" stroke-width="6"/>
          <path d="M753 433h6v12h-6zM770 433h6v12h-6z"/>
          ${MARKS.map(([x, y, w, h]) => `<rect x="${x}" y="${y}" width="${w}" height="${h}" fill="#f014f0"/>`).join("")}</svg>
      </div>
      <div class="foot"><motif-button><gx-icon name="del"></gx-icon></motif-button><motif-button><gx-icon name="ref"></gx-icon></motif-button>
        <p class="aqua">432 measurements for 2 layers</p>
        <motif-button><gx-icon name="copyout"></gx-icon></motif-button><motif-button><gx-icon name="copyin"></gx-icon></motif-button></div>
      <div class="end aqua"><motif-button>Close</motif-button></div>`;
  }
}
customElements.define("results-histogram", ResultsHistogram);

/* ---------- checklist editor ---------- */

class ChecklistRow extends Widget {
  css() {
    return /*css*/ `
      :host { display: block; height: 119px; padding-top: 2px; ${AQUA} background: var(--face); }
      .top { display: grid; grid-template-columns: 32px 27px 103px 48px 1fr; height: 30px; padding-left: 3px; }
      .top > input { appearance: none; width: 13px; height: 13px; margin-top: 5px; }
      .top > input::before { content: ""; display: block; height: 9px; background: #c0084c; clip-path: polygon(0 45%, 20% 40%, 35% 65%, 85% 0, 100% 10%, 40% 100%, 25% 100%); }
      .top > gx-icon { margin-top: 3px; }
      .name { font: bold 15px/18px ${SERIF}; white-space: nowrap; overflow: hidden; padding-top: 5px; margin-right: 2px; }
      .top motif-button { margin-right: 4px; font-weight: normal; }
      .erf { display: flex; padding: 1px 3px; min-width: 0; }
      .erf input { border: 0; padding: 0; background: none; height: 15px; font-weight: normal; min-width: 0; }
      .caret { flex: none; width: 3px; height: 14px; border-left: 1px dashed #000; }
      .acts { display: grid; grid-template-columns: 113px 116px 116px; gap: 4px; height: 23px; margin: 5px 0 5px 1px; font: bold 15px/18px ${SERIF}; }
      .run { display: flex; gap: 5px; height: 31px; padding-left: 2px; }
      .run motif-button { ${TEAL} width: 29px; height: 29px; }
      .run p { margin: 0; text-align: center; line-height: 15px; font-weight: normal; white-space: pre; }
      .msg { border: solid #000; border-width: 1px 0 2px; height: 22px; line-height: 20px; font-weight: normal; padding-left: 2px; white-space: nowrap; overflow: hidden; }`;
  }
  html() {
    return /*html*/ `
      <div class="top"><input class="down" type="checkbox" checked aria-label="${this.attr("name")}"><gx-icon name="${this.attr("icon")}"></gx-icon>
        <span class="name">${this.attr("name")}</span><motif-button>ERF:</motif-button>
        <span class="erf down"><i class="caret"></i><input aria-label="ERF" value="${this.attr("erf")}"></span></div>
      <div class="acts"><motif-button>Parameters...</motif-button><motif-button>Ranges...</motif-button><motif-button>Online...</motif-button></div>
      <div class="run"><motif-button><gx-icon name="run"></gx-icon></motif-button><motif-button><gx-icon name="runsel"></gx-icon></motif-button><motif-button><gx-icon name="runall"></gx-icon></motif-button>
        <p>09 Jan 2020
${this.attr("time")}</p></div>
      <div class="msg cream">${this.attr("msg")}</div>`;
  }
}
customElements.define("checklist-row", ChecklistRow);

class ChecklistEditor extends Widget {
  css() {
    return /*css*/ `
      :host { display: flex; flex-direction: column; ${AQUA} background: var(--face); font: bold 15px/18px ${SERIF}; }
      .menu { height: 34px; border-bottom: 1px solid #000; display: flex; }
      nav { width: 136px; display: flex; gap: 17px; padding-left: 12px; border-right-color: var(--lo); box-shadow: 1px 0 0 #000; }
      u { text-underline-offset: 4px; }
      h2 { margin: 0; height: 21px; font: inherit; line-height: 20px; text-align: center; border-bottom: 1px solid #000; }
      .rows { border: solid; border-width: 2px 2px 0; border-color: var(--lo) transparent transparent var(--lo); font: bold 15px/18px "Liberation Mono", monospace; }
      .gap { height: 9px; border-bottom: 2px solid var(--hi); }
      .end { flex: 1; display: grid; padding: 1px; }`;
  }
  html() {
    return /*html*/ `
      <div class="menu"><nav class="up">${["_File", "_Edit", "_Run"].map(menuItem).join("")}</nav></div>
      <h2>fp-qae</h2>
      <div class="rows teal">
        <checklist-row icon="drill" name="Board-Drill Checks" erf="Std (Mils)" time="04:11 PM - 0:00:02" msg="3 layers processed"></checklist-row>
        <checklist-row icon="signal" name="Signal Layer Checks" erf="Outer (Mils)" time="04:12 PM - 0:00:31" msg="5 layers were processed"></checklist-row>
        <checklist-row icon="signal" name="Power/Ground Checks" erf="Inner (Mils)" time="04:12 PM - 0:00:01" msg="No power/ground layers processed"></checklist-row>
        <checklist-row icon="signal" name="Solder Mask Checks" erf="Soldermask" time="04:13 PM - 0:00:18" msg="2 Solder Mask layers were processed"></checklist-row>
        <checklist-row icon="signal" name="Silk Screen Checks" erf="Silkscreen" time="04:13 PM - 0:00:03" msg="2 Silk Screen layers processed"></checklist-row>
      </div>
      <div class="gap teal"></div>
      <div class="end"><motif-button>Close</motif-button></div>`;
  }
}
customElements.define("checklist-editor", ChecklistEditor);

class MeasurePopup extends Widget {
  css() {
    return /*css*/ `
      :host { display: flex; flex-direction: column; ${TEAL} background: var(--face); }
      h2 { margin: 0; height: 16px; font: inherit; line-height: 18px; text-align: center; }
      motif-radio { height: 29px; padding-left: 5px; border-top: 2px solid #000; ${AQUA} background: var(--face); }
      .gap { flex: 1; border: solid #000; border-width: 2px 0 1px; }
      .end { height: 27px; padding: 2px; display: grid; }
      .end motif-button { ${AQUA} }`;
  }
  html() {
    return `<h2 class="aqua">Measure Mode</h2>` +
      ["Between", "*Between", "Between", "Annular", "Between"].map((s) => `<motif-radio ${s[0] === "*" ? "checked" : ""}>${s.replace("*", "")}</motif-radio>`).join("") +
      `<div class="gap"></div><div class="end"><motif-button>Close</motif-button></div>`;
  }
}
customElements.define("measure-popup", MeasurePopup);

/* ---------- taskbar ---------- */

// groups of open windows; a group shares one frame
const TASKS = [
  [["foxmail", "Foxmail"]], [["shell", "兴森快..."]], [["floppy", "Admin..."]], [["gears", "Genesis"]],
  [["xwin", "Engin..."], ["xwin", "Progr..."], ["xwin", "Graph..."], ["xwin", "Job M..."], ["xwin", "Graph...", true]],
  [["eds", "EDS工..."]], [["excel", "6V016..."], ["excel", "6V016..."]], [["pdf", "相关尺..."], ["pdf", "拼版图..."]], [["gears", "CAM_..."]],
];

class TaskBar extends Widget {
  css() {
    return /*css*/ `
      :host { flex: none; display: flex; gap: 4px; height: 40px; background: linear-gradient(#5c6468 1px, #0c1014 2px, #15191c 20px, #000); font: 12px/18px ${UI}; color: #fff; }
      .orb { width: 56px; padding: 2px 0 0 8px; }
      .orb gx-icon { width: 38px; height: 38px; }
      .group { display: flex; }
      .task { display: flex; align-items: center; gap: 5px; width: 96px; height: 40px; padding-left: 7px; overflow: hidden; white-space: nowrap;
              border: 1px solid #0a0c0e; border-top-color: #aab2b6; border-right-color: #707679; background: linear-gradient(165deg, #6a6f72, #3a3e41 38%, #17191b 50%, #2a2d2f); }
      .task gx-icon { width: 30px; height: 32px; }
      .task.on { background: linear-gradient(165deg, #a8acae, #7c8082 45%, #55595b 55%, #6c7072); }
      .tray { display: flex; gap: 6px; padding: 11px 0 0 4px; }
      .tray gx-icon { width: 18px; height: 18px; }
      .tray b { width: 24px; height: 24px; margin-left: 1px; flex: none; border: 2px solid #18c870; border-radius: 12px; text-align: center; line-height: 20px; background: #0c3c30; }`;
  }
  html() {
    const task = ([icon, text, on]) => `<button class="task ${icon} ${on ? "on" : ""}"><gx-icon name="${icon}"></gx-icon>${text}</button>`;
    const tray = ["keyboard", "restore", "bird", "tri", "swirl", "cross", "foxtray", "dict", "plus", "net", "sound"];
    return `<div class="orb"><gx-icon name="orb"></gx-icon></div>` +
      TASKS.map((g) => `<div class="group">${g.map(task).join("")}</div>`).join("") +
      `<div class="tray">${tray.map((n) => `<gx-icon name="${n}"></gx-icon>`).join("")}<b>39</b></div>`;
  }
}
customElements.define("task-bar", TaskBar);

/* ---------- desktop ---------- */

// the desktop is a little larger than the window: its right and bottom edges run out of view
class GxDesktop extends Widget {
  css() {
    return /*css*/ `
      :host { display: block; height: 100vh; overflow: hidden; }
      .screen { position: relative; display: flex; flex-direction: column; width: calc(100% + 105px); height: calc(100vh + 12px); }
      .work { flex: 1; min-height: 0; display: flex; }
      .viewer { left: 172px; top: 249px; width: 511px; height: 737px; --glow: rgba(170,180,255,.9);
        --glass: linear-gradient(transparent 686px, #d8eef4 694px, #7c8c94 706px, #b8f0f4 724px),
                 radial-gradient(ellipse at 80px 14px, #7c88f8, transparent 110px) 0 0 / 133px 28px no-repeat,
                 linear-gradient(90deg, #3848e8, #1828f0 131px, #080a0c 137px, #0c1012 70%, #3c3e40); }
      .histo { left: 1118px; top: 282px; width: 484px; height: 577px; --glow: rgba(190,190,190,.8); --closer: #a8d4e0;
        --glass: radial-gradient(ellipse at 80px 14px, rgba(170,170,170,.8), transparent 90px) 0 0 / 180px 28px no-repeat,
                 linear-gradient(#b8e8f4 455px, #c82c30 470px) 100% 28px / 8px 100% no-repeat,
                 linear-gradient(90deg, #181c1c 370px, #c82c30 376px 410px, #181c1c 420px 440px, #c82c30 450px) 0 100% / 100% 8px no-repeat,
                 linear-gradient(90deg, #a83034, #b83438 110px, transparent 120px, transparent 155px, #c83034 160px 200px, transparent 210px 235px, #c83034 240px) 0 0 / 370px 9px no-repeat,
                 linear-gradient(90deg, #28282a, #101416 355px, #c83034 360px 400px, #b8e4f0 412px); }
      .check { left: 1520px; top: 46px; width: 397px; height: 725px; --glow: rgba(190,190,190,.8);
        --glass: radial-gradient(ellipse at 80px 14px, rgba(130,130,130,.8), transparent 90px) 0 0 / 200px 28px no-repeat,
                 linear-gradient(90deg, #3c4444, #080c0e 120px, #04080a 225px, #7898a8 240px, #98b8c8) 0 0 / 100% 28px no-repeat, linear-gradient(#4c5450, #181c1c); }
      .meas { left: 1729px; top: 211px; width: 197px; height: 259px; --glow: #fff; --glass: linear-gradient(#c8e8f0, #f0fafc 26px, #b0dce8 40px, #98c8d8); }`;
  }
  html() {
    return /*html*/ `
      <div class="screen">
        <main-menu></main-menu>
        <div class="work"><layer-panel></layer-panel><board-view></board-view></div>
        <prompt-bar></prompt-bar>
        <task-bar></task-bar>
        <glass-window class="check" heading="Checklist Editor"><checklist-editor></checklist-editor></glass-window>
        <glass-window class="meas" heading="Measure Popup"><measure-popup></measure-popup></glass-window>
        <glass-window class="histo" heading="Results histogram" closer><results-histogram></results-histogram></glass-window>
        <glass-window class="viewer" heading="Results viewer" closer><results-viewer></results-viewer></glass-window>
      </div>`;
  }
}
customElements.define("gx-desktop", GxDesktop);
</script>
</body>
</html>
